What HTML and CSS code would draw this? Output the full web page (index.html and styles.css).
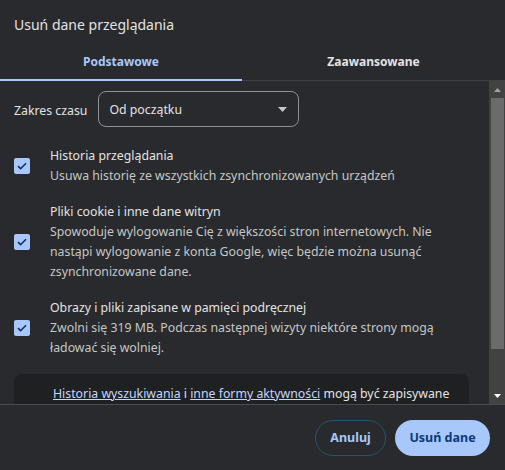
FILE: index.html
```html
<!DOCTYPE html>
<html lang="pl">
<head>
  <meta charset="UTF-8">
  <title>Usuń dane przeglądania</title>
  <meta name="viewport" content="width=device-width, initial-scale=1">
  <link rel="stylesheet" href="styles.css">
</head>
<body>

<div class="dialog">
  <h1 class="title">Usuń dane przeglądania</h1>

  <div class="tabs">
    <div class="tab active">Podstawowe</div>
    <div class="tab">Zaawansowane</div>
  </div>

  <div class="body">
    <div class="scroll">
      <div class="range">
        <span class="range-label">Zakres czasu</span>
        <div class="select">
          <span>Od początku</span>
          <svg width="9" height="5" viewBox="0 0 9 5"><path d="M0 0h9L4.5 5z" fill="#c4c7c5"/></svg>
        </div>
      </div>

      <div class="item">
        <span class="check"><svg width="10" height="8" viewBox="0 0 10 8"><path d="M1 4.2l2.6 2.5L9 1.2" fill="none" stroke="#0b3166" stroke-width="1.6"/></svg></span>
        <div class="item-text">
          <div class="item-title">Historia przeglądania</div>
          <div class="item-sub">Usuwa historię ze wszystkich zsynchronizowanych urządzeń</div>
        </div>
      </div>

      <div class="item">
        <span class="check"><svg width="10" height="8" viewBox="0 0 10 8"><path d="M1 4.2l2.6 2.5L9 1.2" fill="none" stroke="#0b3166" stroke-width="1.6"/></svg></span>
        <div class="item-text">
          <div class="item-title">Pliki cookie i inne dane witryn</div>
          <div class="item-sub">Spowoduje wylogowanie Cię z większości stron internetowych. Nie nastąpi wylogowanie z konta Google, więc będzie można usunąć zsynchronizowane dane.</div>
        </div>
      </div>

      <div class="item">
        <span class="check"><svg width="10" height="8" viewBox="0 0 10 8"><path d="M1 4.2l2.6 2.5L9 1.2" fill="none" stroke="#0b3166" stroke-width="1.6"/></svg></span>
        <div class="item-text">
          <div class="item-title">Obrazy i pliki zapisane w pamięci podręcznej</div>
          <div class="item-sub">Zwolni się 319 MB. Podczas następnej wizyty niektóre strony mogą ładować się wolniej.</div>
        </div>
      </div>

      <div class="notice">
        <a href="#">Historia wyszukiwania</a> i <a href="#">inne formy aktywności</a> mogą być zapisywane
      </div>
    </div>

    <div class="scrollbar">
      <div class="arrow"><svg width="7" height="4" viewBox="0 0 7 4"><path d="M0 4h7L3.5 0z" fill="#a0a0a0"/></svg></div>
      <div class="thumb"></div>
      <div class="rest"></div>
      <div class="arrow"><svg width="7" height="4" viewBox="0 0 7 4"><path d="M0 0h7L3.5 4z" fill="#ffffff"/></svg></div>
    </div>
  </div>

  <div class="footer">
    <button class="btn outline">Anuluj</button>
    <button class="btn filled">Usuń dane</button>
  </div>
</div>

</body>
</html>
```

FILE: styles.css
```css
body {
  margin: 0;
  background-color: #292a2d;
  font-family: "Noto Sans", "Open Sans", sans-serif;
  color: #e3e3e3;
}
.dialog {
  width: 505px;
  height: 470px;
  display: flex;
  flex-direction: column;
}
.title {
  margin: 0;
  padding: 14px 14px 0;
  height: 28px;
  font-size: 14px;
  font-weight: normal;
  line-height: 22px;
}
.tabs {
  display: flex;
  height: 38px;
  border-bottom: 1px solid #3f4043;
}
.tab {
  flex: 1;
  display: flex;
  align-items: center;
  justify-content: center;
  font-size: 12px;
  font-weight: bold;
  color: #e3e3e3;
}
.tab.active {
  flex: 0 0 242px;
  color: #a8c7fa;
  border-bottom: 2px solid #a8c7fa;
  margin-bottom: -1px;
  padding-top: 1px;
}
.body {
  display: flex;
  height: 323px;
  border-bottom: 1px solid #4a4b4e;
}
.scroll {
  flex: 1;
  overflow: hidden;
  padding: 10px 20px 0 14px;
}
.range {
  display: flex;
  align-items: center;
  gap: 11px;
  font-size: 12.3px;
}
.range-label {
  padding-top: 2px;
}
.select {
  height: 34px;
  width: 178px;
  border: 1px solid #8e918f;
  border-radius: 8px;
  display: flex;
  align-items: center;
  justify-content: space-between;
  padding: 0 11px 0 10px;
}
.item {
  display: flex;
  align-items: center;
  gap: 20px;
  margin-top: 16px;
  font-size: 12.3px;
  line-height: 20px;
}
.range + .item {
  margin-top: 19px;
}
.check {
  flex: 0 0 16px;
  height: 16px;
  background-color: #a8c7fa;
  border-radius: 2px;
  display: flex;
  align-items: center;
  justify-content: center;
}
.item-title {
  color: #e3e3e3;
}
.item-sub {
  color: #c4c7c5;
}
.notice {
  margin-top: 16px;
  background-color: #1f2022;
  border-radius: 8px;
  padding: 10px 10px 9px 39px;
  font-size: 12.3px;
  line-height: 20px;
  color: #e3e3e3;
  white-space: nowrap;
}
.notice a {
  color: #c2d7fc;
}
.scrollbar {
  flex: 0 0 16px;
  display: flex;
  flex-direction: column;
  background-color: #424242;
}
.arrow {
  height: 17px;
  display: flex;
  align-items: center;
  justify-content: center;
}
.thumb {
  height: 251px;
  margin: 0 1px 0 2px;
  background-color: #6b6b6b;
}
.rest {
  flex: 1;
}
.footer {
  flex: 1;
  display: flex;
  justify-content: flex-end;
  align-items: center;
  gap: 9px;
  padding: 0 15px 0 0;
}
.btn {
  height: 36px;
  border-radius: 18px;
  font-family: inherit;
  font-size: 12.5px;
  font-weight: bold;
  cursor: pointer;
}
.outline {
  width: 71px;
  background: none;
  border: 1px solid #1d5a6e;
  color: #a8c7fa;
}
.filled {
  width: 95px;
  border: none;
  background-color: #a8c7fa;
  color: #0b3a7a;
}
```
